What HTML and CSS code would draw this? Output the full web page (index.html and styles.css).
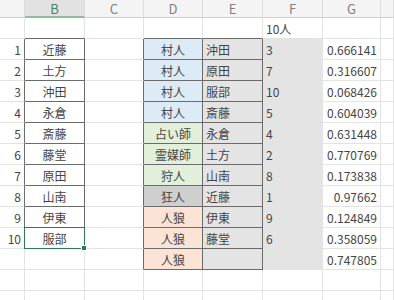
FILE: index.html
```
<!DOCTYPE html>
<html lang="ja">
<head>
    <meta charset="UTF-8">
    <meta name="viewport" content="width=device-width, initial-scale=1.0">
    <title>配役シート</title>
    <link rel="stylesheet" href="styles.css">
</head>
<body>
    <div class="sheet">
        <!-- column headers -->
        <div class="hd"></div>
        <div class="hd sel">B</div>
        <div class="hd">C</div>
        <div class="hd">D</div>
        <div class="hd">E</div>
        <div class="hd">F</div>
        <div class="hd">G</div>
        <div class="hd"></div>

        <!-- row 0: header of the role table -->
        <div class="c"></div>
        <div class="c top"></div>
        <div class="c"></div>
        <div class="c top"></div>
        <div class="c top"></div>
        <div class="c txt">10人</div>
        <div class="c"></div>
        <div class="c"></div>

        <div class="c num edge">1</div>
        <div class="c name box">近藤</div>
        <div class="c edge"></div>
        <div class="c role box villager">村人</div>
        <div class="c txt box grey">沖田</div>
        <div class="c txt fill">3</div>
        <div class="c num">0.666141</div>
        <div class="c"></div>

        <div class="c num edge">2</div>
        <div class="c name box">土方</div>
        <div class="c edge"></div>
        <div class="c role box villager">村人</div>
        <div class="c txt box grey">原田</div>
        <div class="c txt fill">7</div>
        <div class="c num">0.316607</div>
        <div class="c"></div>

        <div class="c num edge">3</div>
        <div class="c name box">沖田</div>
        <div class="c edge"></div>
        <div class="c role box villager">村人</div>
        <div class="c txt box grey">服部</div>
        <div class="c txt fill">10</div>
        <div class="c num">0.068426</div>
        <div class="c"></div>

        <div class="c num edge">4</div>
        <div class="c name box">永倉</div>
        <div class="c edge"></div>
        <div class="c role box villager">村人</div>
        <div class="c txt box grey">斎藤</div>
        <div class="c txt fill">5</div>
        <div class="c num">0.604039</div>
        <div class="c"></div>

        <div class="c num edge">5</div>
        <div class="c name box">斎藤</div>
        <div class="c edge"></div>
        <div class="c role box seer">占い師</div>
        <div class="c txt box grey">永倉</div>
        <div class="c txt fill">4</div>
        <div class="c num">0.631448</div>
        <div class="c"></div>

        <div class="c num edge">6</div>
        <div class="c name box">藤堂</div>
        <div class="c edge"></div>
        <div class="c role box seer">霊媒師</div>
        <div class="c txt box grey">土方</div>
        <div class="c txt fill">2</div>
        <div class="c num">0.770769</div>
        <div class="c"></div>

        <div class="c num edge">7</div>
        <div class="c name box">原田</div>
        <div class="c edge"></div>
        <div class="c role box seer">狩人</div>
        <div class="c txt box grey">山南</div>
        <div class="c txt fill">8</div>
        <div class="c num">0.173838</div>
        <div class="c"></div>

        <div class="c num edge">8</div>
        <div class="c name box">山南</div>
        <div class="c edge"></div>
        <div class="c role box madman">狂人</div>
        <div class="c txt box grey">近藤</div>
        <div class="c txt fill">1</div>
        <div class="c num">0.97662</div>
        <div class="c"></div>

        <div class="c num edge">9</div>
        <div class="c name box">伊東</div>
        <div class="c edge"></div>
        <div class="c role box wolf">人狼</div>
        <div class="c txt box grey">伊東</div>
        <div class="c txt fill">9</div>
        <div class="c num">0.124849</div>
        <div class="c"></div>

        <div class="c num edge">10</div>
        <div class="c name box active">服部</div>
        <div class="c edge"></div>
        <div class="c role box wolf">人狼</div>
        <div class="c txt box grey">藤堂</div>
        <div class="c txt fill">6</div>
        <div class="c num">0.358059</div>
        <div class="c"></div>

        <div class="c"></div>
        <div class="c"></div>
        <div class="c edge"></div>
        <div class="c role box wolf">人狼</div>
        <div class="c txt box grey"></div>
        <div class="c txt fill"></div>
        <div class="c num">0.747805</div>
        <div class="c"></div>

        <div class="c"></div>
        <div class="c"></div>
        <div class="c"></div>
        <div class="c"></div>
        <div class="c"></div>
        <div class="c"></div>
        <div class="c"></div>
        <div class="c"></div>

        <div class="c"></div>
        <div class="c"></div>
        <div class="c"></div>
        <div class="c"></div>
        <div class="c"></div>
        <div class="c"></div>
        <div class="c"></div>
        <div class="c"></div>
    </div>
</body>
</html>
```

FILE: styles.css
```
body {
    margin: 0;
    background: #ffffff;
    overflow: hidden;
    font-family: "Noto Sans CJK JP", "Noto Sans", sans-serif;
    font-size: 12px;
    color: #454545;
}
.sheet {
    display: grid;
    grid-template-columns: 25px 60px 59px 59px 60px 60px 58px minmax(0, 1fr);
    grid-template-rows: 18px;
    grid-auto-rows: 21px;
}
.sheet > div {
    box-sizing: border-box;
    display: flex;
    align-items: center;
    white-space: nowrap;
    overflow: hidden;
}

/* column header strip */
.hd {
    background: #f4f4f4;
    border-right: 1px solid #dcdcdc;
    border-bottom: 1px solid #d0d0d0;
    justify-content: center;
    color: #808080;
    font-size: 13px;
}
.hd.sel {
    background: #e2e2e2;
    color: #4a8463;
    border-bottom: 2px solid #8fbba2;
}

/* plain grid cells */
.c {
    border-right: 1px solid #e3e3e3;
    border-bottom: 1px solid #e3e3e3;
}
.num {
    justify-content: flex-end;
    padding-right: 3px;
}
.txt {
    padding-left: 3px;
}
.name,
.role {
    justify-content: center;
}

/* bordered blocks */
.box {
    border-right-color: #6b6b6b;
    border-bottom-color: #6b6b6b;
}
.edge {
    border-right-color: #6b6b6b;
}
.top {
    border-bottom-color: #6b6b6b;
}

/* role fills */
.villager { background: #ddebf7; }
.seer { background: #e2efda; }
.madman { background: #d0cfcf; }
.wolf { background: #fbe3d5; }
.grey { background: #e4e4e4; }
.fill {
    background: #e4e4e4;
    border-right-color: #e4e4e4;
    border-bottom-color: #e4e4e4;
}

/* selected cell with its fill handle */
.active {
    position: relative;
    overflow: visible !important;
}
.active::before {
    content: "";
    position: absolute;
    left: -1px;
    top: -1px;
    right: -1px;
    bottom: -1px;
    border: 1px solid #2f7a52;
}
.active::after {
    content: "";
    position: absolute;
    right: -3px;
    bottom: -3px;
    width: 4px;
    height: 4px;
    background: #2f7a52;
    border: 1px solid #ffffff;
}
```
